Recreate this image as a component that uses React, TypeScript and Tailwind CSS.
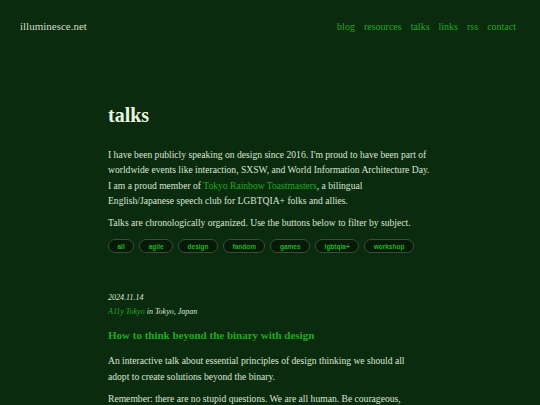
import React from "react";

const serif = { fontFamily: '"Liberation Serif", "DejaVu Serif", serif' };

const tags = ["all", "agile", "design", "fandom", "games", "lgbtqia+", "workshop"];

export default function App() {
  return (
    <div className="min-h-[405px] bg-[#0b2b0f] text-[#d9e6d4]" style={serif}>
      <header className="flex items-center justify-between pl-[20px] pr-[24px] pt-[16px] h-[37px]">
        <div className="text-[11px] text-[#cfdcc9]">illuminesce.net</div>
        <nav className="flex gap-[9px] text-[10px] text-[#22a822]">
          <span>blog</span>
          <span>resources</span>
          <span>talks</span>
          <span>links</span>
          <span>rss</span>
          <span>contact</span>
        </nav>
      </header>
      <main className="ml-[108px] w-[324px] pt-[68px]">
        <h1 className="text-[20px] font-bold leading-none text-[#e6f7df]">talks</h1>
        <p className="mt-[22px] text-[9.6px] leading-[15.3px]">
          I have been publicly speaking on design since 2016. I'm proud to have been part of
          <br />
          worldwide events like interaction, SXSW, and World Information Architecture Day.
          <br />
          I am a proud member of <span className="text-[#22a822]">Tokyo Rainbow Toastmasters</span>, a bilingual
          <br />
          English/Japanese speech club for LGBTQIA+ folks and allies.
        </p>
        <p className="mt-[7px] text-[9.6px] leading-[15.3px]">
          Talks are chronologically organized. Use the buttons below to filter by subject.
        </p>
        <div className="mt-[9px] flex gap-[5px]">
          {tags.map((t) => (
            <span
              key={t}
              className="h-[14px] px-[8.5px] rounded-full border border-[#3a4c3a] bg-[#061a08] text-[6.5px] font-bold text-[#22b522] flex items-center"
              style={{ fontFamily: '"Liberation Sans", Arial, sans-serif' }}
            >
              {t}
            </span>
          ))}
        </div>
        <div className="mt-[38px] text-[8px] italic leading-[14px]">2024.11.14</div>
        <div className="text-[8px] italic leading-[14px]">
          <span className="text-[#22a822]">A11y Tokyo</span> in Tokyo, Japan
        </div>
        <h2 className="mt-[8px] text-[11px] font-bold text-[#22a822] leading-[16px]">
          How to think beyond the binary with design
        </h2>
        <p className="mt-[10px] text-[9.6px] leading-[15.3px]">
          An interactive talk about essential principles of design thinking we should all
          <br />
          adopt to create solutions beyond the binary.
        </p>
        <p className="mt-[7px] text-[9.6px] leading-[15.3px]">
          Remember: there are no stupid questions. We are all human. Be courageous,
          <br />
          and let's learn together.
        </p>
      </main>
    </div>
  );
}
